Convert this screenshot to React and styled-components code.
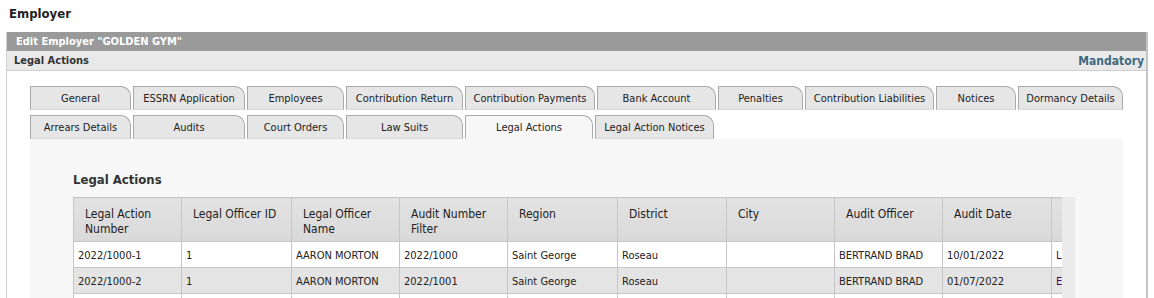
import React from "react";
import styled, { createGlobalStyle } from "styled-components";

const GlobalStyle = createGlobalStyle`
  body {
    margin: 0;
    background: #ffffff;
    font-family: "DejaVu Sans Condensed", "DejaVu Sans", "Liberation Sans", sans-serif;
    font-stretch: condensed;
    color: #222;
  }
`;

const tabRows = [
  [
    ["General", 101],
    ["ESSRN Application", 112],
    ["Employees", 97],
    ["Contribution Return", 117],
    ["Contribution Payments", 130],
    ["Bank Account", 119],
    ["Penalties", 85],
    ["Contribution Liabilities", 129],
    ["Notices", 80],
    ["Dormancy Details", 105],
  ],
  [
    ["Arrears Details", 101],
    ["Audits", 112],
    ["Court Orders", 97],
    ["Law Suits", 117],
    ["Legal Actions", 128, true],
    ["Legal Action Notices", 119],
  ],
];

const columns = [
  ["Legal Action Number", 108],
  ["Legal Officer ID", 110],
  ["Legal Officer Name", 108],
  ["Audit Number Filter", 108],
  ["Region", 110],
  ["District", 109],
  ["City", 108],
  ["Audit Officer", 108],
  ["Audit Date", 109],
  ["", 110],
];

const rows = [
  ["2022/1000-1", "1", "AARON MORTON", "2022/1000", "Saint George", "Roseau", "", "BERTRAND BRAD", "10/01/2022", "L"],
  ["2022/1000-2", "1", "AARON MORTON", "2022/1001", "Saint George", "Roseau", "", "BERTRAND BRAD", "01/07/2022", "E"],
  ["", "", "", "", "", "", "", "", "", ""],
];

const App = () => {
  return (
    <>
      <GlobalStyle />
      <Page>
        <PageTitle>Employer</PageTitle>
        <Panel>
          <TitleBar>Edit Employer "GOLDEN GYM"</TitleBar>
          <SubBar>
            <span>Legal Actions</span>
            <Mandatory>Mandatory</Mandatory>
          </SubBar>
          <PanelBody>
            <Tabs>
              {tabRows.map((row, i) => (
                <TabRow key={i}>
                  {row.map(([label, w, active]) => (
                    <Tab key={label} $w={w} $active={active}>
                      {label}
                    </Tab>
                  ))}
                </TabRow>
              ))}
            </Tabs>
            <Content>
              <SectionTitle>Legal Actions</SectionTitle>
              <GridWrap>
                <Viewport>
                  <Table>
                    <colgroup>
                      {columns.map(([c, w], i) => (
                        <col key={i} style={{ width: w }} />
                      ))}
                    </colgroup>
                    <thead>
                      <tr>
                        {columns.map(([c], i) => (
                          <Th key={i}>{c}</Th>
                        ))}
                      </tr>
                    </thead>
                    <tbody>
                      {rows.map((r, i) => (
                        <Tr key={i} $alt={i % 2 === 1}>
                          {r.map((v, j) => (
                            <Td key={j} $link={j === 9}>
                              {v}
                            </Td>
                          ))}
                        </Tr>
                      ))}
                    </tbody>
                  </Table>
                </Viewport>
                <ScrollTrack />
              </GridWrap>
            </Content>
          </PanelBody>
        </Panel>
      </Page>
    </>
  );
};

export default App;

const Page = styled.div`
  padding: 0 6px;
`;

const PageTitle = styled.div`
  font-size: 13px;
  font-weight: bold;
  color: #222;
  padding: 6px 0 0 3px;
  height: 32px;
  box-sizing: border-box;
`;

const Panel = styled.div`
  width: 1142px;
  border-left: 1px solid #d0d0d0;
  border-right: 2px solid #c4c4c4;
  box-sizing: border-box;
`;

const TitleBar = styled.div`
  height: 19px;
  background: #9a9a9a;
  color: #ffffff;
  font-size: 11px;
  font-weight: bold;
  padding-left: 9px;
  line-height: 20px;
`;

const SubBar = styled.div`
  height: 19px;
  background: #e9e9e9;
  border-bottom: 1px solid #cfcfcf;
  display: flex;
  justify-content: space-between;
  align-items: center;
  padding: 0 2px 0 7px;
  font-size: 11px;
  font-weight: bold;
  color: #333;
`;

const Mandatory = styled.span`
  font-size: 12px;
  color: #3d6a80;
`;

const PanelBody = styled.div`
  padding: 15px 0 0 23px;
`;

const Tabs = styled.div`
  display: flex;
  flex-direction: column;
  gap: 5px;
`;

const TabRow = styled.div`
  display: flex;
  gap: 2px;
`;

const Tab = styled.div`
  width: ${(p) => p.$w}px;
  height: 24px;
  box-sizing: border-box;
  background: ${(p) => (p.$active ? "#f7f7f7" : "#e6e6e6")};
  border: 1px solid #a9a9a9;
  border-bottom: 1px solid ${(p) => (p.$active ? "#f7f7f7" : "#d8d8d8")};
  border-top-right-radius: 10px;
  display: flex;
  align-items: center;
  justify-content: center;
  font-size: 11px;
  color: #222;
  white-space: nowrap;
`;

const Content = styled.div`
  width: 1093px;
  background: #f7f7f7;
  padding: 33px 0 0 43px;
  box-sizing: border-box;
  height: 170px;
`;

const SectionTitle = styled.div`
  font-size: 13px;
  font-weight: bold;
  color: #333;
  height: 25px;
`;

const GridWrap = styled.div`
  display: flex;
  align-items: stretch;
`;

const Viewport = styled.div`
  width: 989px;
  overflow: hidden;
`;

const ScrollTrack = styled.div`
  width: 13px;
  background: #ebebeb;
`;

const Table = styled.table`
  border-collapse: collapse;
  table-layout: fixed;
  width: 1088px;
  border: 1px solid #c6c6c6;
`;

const Th = styled.th`
  height: 44px;
  box-sizing: border-box;
  background: linear-gradient(#e2e2e2, #d9d9d9);
  border: 1px solid #c6c6c6;
  text-align: left;
  vertical-align: top;
  padding: 9px 8px 0 11px;
  font-size: 12px;
  font-weight: normal;
  line-height: 15px;
  color: #222;
`;

const Tr = styled.tr`
  background: ${(p) => (p.$alt ? "#e4e4e4" : "#ffffff")};
`;

const Td = styled.td`
  height: 26px;
  box-sizing: border-box;
  border: 1px solid #c6c6c6;
  padding: 1px 4px 0;
  font-size: 11px;
  color: ${(p) => (p.$link ? "#3c0a63" : "#222")};
  white-space: nowrap;
  overflow: hidden;
`;
